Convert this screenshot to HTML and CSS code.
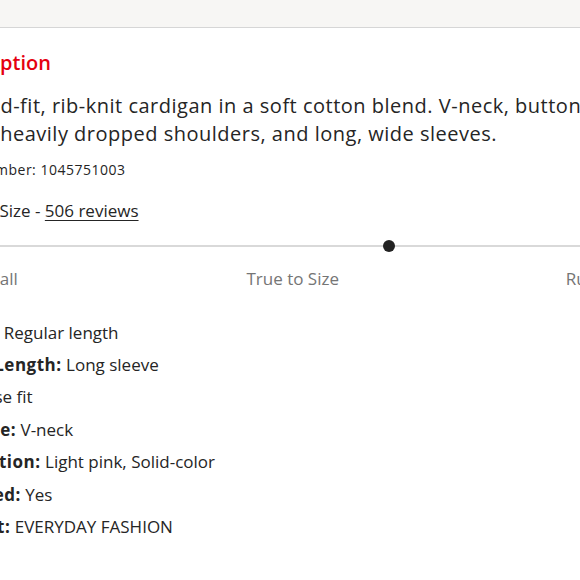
FILE: index.html
```html
<!DOCTYPE html>
<html lang="en">
<head>
<meta charset="utf-8">
<link rel="stylesheet" href="styles.css">
</head>
<body>
<div class="topbar"></div>
<main class="panel">
  <h2 class="title">Description</h2>
  <p class="desc">Relaxed-fit, rib-knit cardigan in a soft cotton blend. V-neck, buttons down the front, heavily dropped shoulders, and long, wide sleeves.</p>
  <p class="artno">Article number: 1045751003</p>
  <p class="fit">True to Size - <a class="reviews" href="#">506 reviews</a></p>
  <div class="scale">
    <div class="track"><span class="knob"></span></div>
    <div class="scale-labels">
      <span>Runs small</span>
      <span>True to Size</span>
      <span>Runs large</span>
    </div>
  </div>
  <ul class="attrs">
    <li><b>Length:</b> Regular length</li>
    <li><b>Sleeve Length:</b> Long sleeve</li>
    <li><b>Fit:</b> Loose fit</li>
    <li><b>Neckline:</b> V-neck</li>
    <li><b>Description:</b> Light pink, Solid-color</li>
    <li><b>Imported:</b> Yes</li>
    <li><b>Concept:</b> EVERYDAY FASHION</li>
  </ul>
</main>
</body>
</html>
```
FILE: styles.css
```css
html, body {
  margin: 0;
  padding: 0;
  background: #ffffff;
  overflow: hidden;
  width: 580px;
  height: 580px;
}
body {
  font-family: "Open Sans", "Liberation Sans", sans-serif;
  color: #252525;
}
.topbar {
  height: 27px;
  background: #f7f6f4;
  border-bottom: 1px solid #d6d6d6;
}
.panel {
  margin-left: -60px;
  width: 820px;
}
.title {
  margin: 23px 0 0;
  font-size: 20px;
  font-weight: 600;
  color: #e50010;
  line-height: 24px;
}
.desc {
  margin: 17px 0 0;
  font-size: 20px;
  line-height: 28px;
  letter-spacing: 0.5px;
  text-indent: -4px;
  width: 770px;
}
.artno {
  margin: 12px 0 0;
  font-size: 14px;
  line-height: 20px;
  letter-spacing: 0.5px;
  text-indent: -12px;
}
.fit {
  margin: 20px 0 0;
  font-size: 17px;
  line-height: 22px;
  text-indent: -2px;
}
.reviews {
  color: #252525;
  text-decoration: underline;
  text-decoration-thickness: 1px;
  text-underline-offset: 3px;
}
.scale {
  margin-top: 23px;
  width: 720px;
}
.track {
  position: relative;
  height: 2px;
  background: #d9d9d9;
}
.knob {
  position: absolute;
  left: 443px;
  top: -5px;
  width: 12px;
  height: 12px;
  border-radius: 50%;
  background: #222222;
}
.scale-labels {
  display: flex;
  justify-content: space-between;
  margin: 21px 0 0 -8px;
  width: 717px;
  font-size: 17px;
  color: #757575;
  line-height: 22px;
}
.scale-labels span:nth-child(2) {
  margin-left: 2px;
}
.attrs {
  list-style: none;
  margin: 26.5px 0 0 -8px;
  padding: 0;
  font-size: 17px;
  line-height: 32.4px;
}
.attrs b {
  font-weight: 700;
  letter-spacing: 0.5px;
}
```
